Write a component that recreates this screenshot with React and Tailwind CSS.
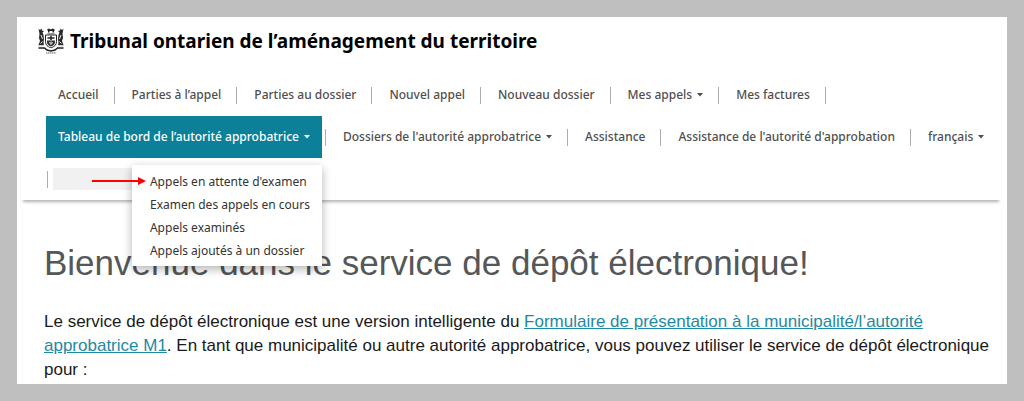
const firstRow = [
  { label: 'Accueil' },
  { label: 'Parties à l’appel' },
  { label: 'Parties au dossier' },
  { label: 'Nouvel appel' },
  { label: 'Nouveau dossier' },
  { label: 'Mes appels', menu: true },
  { label: 'Mes factures' },
];

const secondRow = [
  { label: 'Dossiers de l\'autorité approbatrice', menu: true },
  { label: 'Assistance' },
  { label: 'Assistance de l\'autorité d\'approbation' },
  { label: 'français', menu: true },
];

const dashboardMenu = [
  'Appels en attente d\'examen',
  'Examen des appels en cours',
  'Appels examinés',
  'Appels ajoutés à un dossier',
];

function Crest() {
  return (
    <svg width="26" height="26" viewBox="0 0 52 52" className="shrink-0" aria-hidden="true">
      {/* Crest bear */}
      <path d="M18 3l4-2 3 2 5-2 4 3-2 2v3h-3V6h-6v3h-3V6z" fill="#222" />
      <path d="M18 10h16l-2 3H20z" fill="#999" />
      {/* Moose and deer */}
      <path d="M1 1l3 3 3-3 1 4 4 1-3 3 2 5 1 8-1 7 1 6-10 2-1-3 3-8-2-6 1-8-1-6z" fill="#2a2a2a" />
      <path d="M51 1l-3 3-3-3-1 4-4 1 3 3-2 5-1 8 1 7-1 6 10 2 1-3-3-8 2-6-1-8 1-6z" fill="#2a2a2a" />
      <path d="M6 14l3 8M46 14l-3 8M5 31l4-4M47 31l-4-4" stroke="#eee" strokeWidth="2" />
      {/* Shield */}
      <path d="M15 14h22v13c0 7-4 10-11 13-7-3-11-6-11-13z" fill="#fff" stroke="#222" strokeWidth="2" />
      <path d="M18 25h16v3c0 4-3 7-8 9-5-2-8-5-8-9z" fill="#333" />
      <path d="M26 16v8M19 20h14" stroke="#222" strokeWidth="3" />
      <path d="M26 27v7M22 29l4 2 4-2" stroke="#ddd" strokeWidth="2" fill="none" />
      {/* Motto ribbon */}
      <path d="M1 36h11l5 3 9 4 9-4 5-3h11" fill="none" stroke="#fff" strokeWidth="3" />
      <path d="M1 40h12l5 4 8 2 8-2 5-4h12" fill="none" stroke="#222" strokeWidth="3" />
      <path d="M16 50h20" stroke="#999" strokeWidth="3" strokeDasharray="3 1" />
    </svg>
  );
}

function Caret() {
  return (
    <svg width="6" height="4" viewBox="0 0 6 4" fill="currentColor" aria-hidden="true">
      <path d="M0 0h6L3 3.5z" />
    </svg>
  );
}

function Divider() {
  return <li role="separator" className="mr-[5px] ml-[3px] h-[17px] w-px shrink-0 bg-[#adadad]" />;
}

function NavItem({ item }) {
  const classes = 'flex h-[42px] items-center gap-[5px] px-3 whitespace-nowrap';
  return (
    <li>
      {item.menu ? (
        <button type="button" className={classes}>
          {item.label}
          <Caret />
        </button>
      ) : (
        <a href="#" className={classes}>{item.label}</a>
      )}
    </li>
  );
}

function DashboardMenu() {
  return (
    <li className="relative">
      <button
        type="button"
        aria-expanded="true"
        className="flex h-[42px] items-center gap-[5px] bg-[#0c7f99] px-3 whitespace-nowrap text-white"
      >
        Tableau de bord de l’autorité approbatrice
        <Caret />
      </button>
      <div className="absolute top-[49px] right-0 z-10 w-[190px] bg-white py-1 pt-[5px] font-normal text-[#333] shadow-[0_3px_9px_rgba(0,0,0,0.3)]">
        <ul>
          {dashboardMenu.map((label) => (
            <li key={label}>
              <a href="#" className="block pl-[18px] leading-[23px] whitespace-nowrap">{label}</a>
            </li>
          ))}
        </ul>
        <svg width="54" height="8" viewBox="0 0 54 8" className="absolute top-3 -left-10" aria-hidden="true">
          <path d="M0 4h47" stroke="#f00" strokeWidth="2" />
          <path d="M46 0l8 4-8 4z" fill="#f00" />
        </svg>
      </div>
    </li>
  );
}

export default function App() {
  return (
    <div className="min-h-screen bg-[#bfbfbf] p-[17px] font-['Liberation_Sans',Arial,sans-serif]">
      <div className="bg-white pb-0.5">
        <header className="mr-[6px] ml-1 pt-[11px] pl-[17px] font-['Noto_Sans','Segoe_UI',sans-serif] shadow-[0_4px_3px_-2px_rgba(0,0,0,0.3)]">
          <div className="flex items-center gap-[6px]">
            <Crest />
            <span className="text-[19px] leading-[26px] font-bold text-black">
              Tribunal ontarien de l’aménagement du territoire
            </span>
          </div>

          <nav className="mt-5 pl-2 text-xs font-medium text-[#4f4f4f]">
            <ul className="flex items-center">
              {firstRow.map((item) => [
                <NavItem key={item.label} item={item} />,
                <Divider key={`${item.label}-divider`} />,
              ])}
            </ul>
            <ul className="flex items-center">
              <DashboardMenu />
              {secondRow.map((item) => [
                <Divider key={`${item.label}-divider`} />,
                <NavItem key={item.label} item={item} />,
              ])}
            </ul>
            <ul className="-ml-0.5 flex h-[42px] items-center">
              <Divider />
              <li className="h-[22px] w-20 bg-[#f1f1f1]" />
            </ul>
          </nav>
        </header>

        <main className="pt-[39px] pr-3 pl-[27px]">
          <h1 className="text-[35px] leading-[48px] text-[#555759]">
            Bienvenue dans le service de dépôt électronique!
          </h1>
          <p className="mt-[23px] text-[17px] leading-6 text-[#1a1a1a]">
            Le service de dépôt électronique est une version intelligente du{' '}
            <a href="#" className="text-[#1d8aa3] underline">
              Formulaire de présentation à la municipalité/l’autorité approbatrice M1
            </a>
            . En tant que municipalité ou autre autorité approbatrice, vous pouvez utiliser le service de dépôt électronique pour :
          </p>
        </main>
      </div>
    </div>
  );
}
